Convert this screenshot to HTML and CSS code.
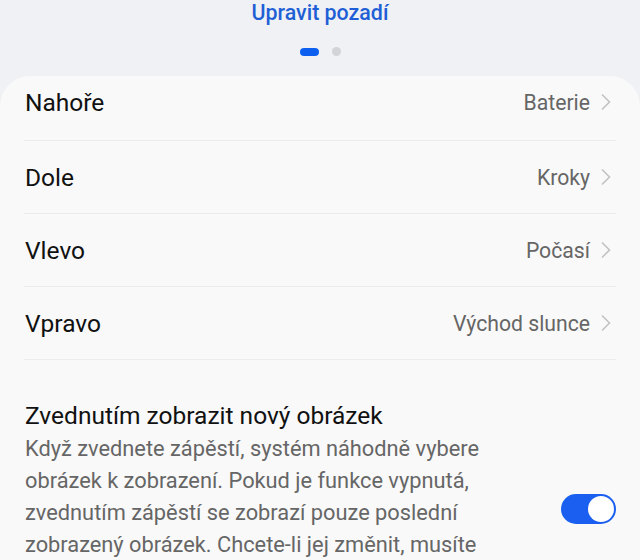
FILE: index.html
```html
<!DOCTYPE html>
<html lang="cs">
	<head>
		<meta charset="UTF-8" />
		<meta name="viewport" content="width=device-width, initial-scale=1.0" />
		<title>Upravit pozadí</title>

		<link rel="stylesheet" href="styles.css">
	</head>

	<body>
		<!-- Header with edit link and page dots -->
		<div class="header">
			<a class="editLink" href="#">Upravit pozadí</a>
			<div class="pageDots">
				<span class="dot dot-active"></span>
				<span class="dot"></span>
			</div>
		</div>

		<!-- Settings card -->
		<div class="card">
			<div class="row row-first">
				<span class="rowLabel">Nahoře</span>
				<span class="rowValue">Baterie</span>
				<svg class="chevron" viewBox="0 0 12 18" width="12" height="18">
					<path d="M2 1.5 L9.5 9 L2 16.5" />
				</svg>
			</div>
			<div class="row">
				<span class="rowLabel">Dole</span>
				<span class="rowValue">Kroky</span>
				<svg class="chevron" viewBox="0 0 12 18" width="12" height="18">
					<path d="M2 1.5 L9.5 9 L2 16.5" />
				</svg>
			</div>
			<div class="row">
				<span class="rowLabel">Vlevo</span>
				<span class="rowValue">Počasí</span>
				<svg class="chevron" viewBox="0 0 12 18" width="12" height="18">
					<path d="M2 1.5 L9.5 9 L2 16.5" />
				</svg>
			</div>
			<div class="row">
				<span class="rowLabel">Vpravo</span>
				<span class="rowValue">Východ slunce</span>
				<svg class="chevron" viewBox="0 0 12 18" width="12" height="18">
					<path d="M2 1.5 L9.5 9 L2 16.5" />
				</svg>
			</div>

			<div class="switchSection">
				<div class="switchText">
					<div class="switchTitle">Zvednutím zobrazit nový obrázek</div>
					<div class="switchDesc">
						Když zvednete zápěstí, systém náhodně vybere obrázek k zobrazení. Pokud je funkce vypnutá,
						zvednutím zápěstí se zobrazí pouze poslední zobrazený obrázek. Chcete-li jej změnit, musíte
						hodinky odemknout a klepnout na obrazovku nebo stisknout tlačítko.
					</div>
				</div>
				<div class="toggle toggle-on">
					<span class="knob"></span>
				</div>
			</div>
		</div>
	</body>
</html>
```

FILE: styles.css
```css
body {
	margin: 0;
	height: 560px;
	overflow: hidden;
	background-color: #f0f1f5;
	font-family: Roboto, "Noto Sans", sans-serif;
}

.header {
	display: flex;
	flex-direction: column;
	align-items: center;
	height: 76px;
}

.editLink {
	font-size: 21.4px;
	line-height: 26px;
	font-weight: 500;
	color: #1f5fd6;
	text-decoration: none;
}

.pageDots {
	display: flex;
	align-items: center;
	gap: 13px;
	margin-top: 21px;
}

.dot {
	width: 9px;
	height: 9px;
	border-radius: 50%;
	background-color: #d3d4d8;
}

.dot-active {
	width: 19px;
	height: 8px;
	border-radius: 4px;
	background-color: #0d5ff0;
}

.card {
	background-color: #f9f9f9;
	border-radius: 30px 30px 0 0;
	min-height: 500px;
}

.row {
	display: flex;
	align-items: center;
	height: 72px;
	margin: 0 24px;
	border-bottom: 1px solid #ececec;
}

.row-first {
	height: 52px;
	padding-bottom: 12px;
}

.rowLabel {
	flex: 1;
	margin-left: 1px;
	font-size: 24.5px;
	color: #111;
}

.rowValue {
	font-size: 21.2px;
	color: #666;
	margin-right: 10px;
}

.chevron {
	fill: none;
	stroke: #c2c2c2;
	stroke-width: 1.6;
	margin-right: 4px;
}

.switchSection {
	display: flex;
	align-items: center;
	padding: 39px 24px 0 25px;
}

.switchText {
	flex: 1;
}

.switchTitle {
	font-size: 24.5px;
	line-height: 34px;
	color: #111;
}

.switchDesc {
	max-width: 490px;
	font-size: 21.8px;
	line-height: 32px;
	color: #666;
}

.toggle {
	position: relative;
	width: 55px;
	height: 30px;
	margin-bottom: 6px;
	border-radius: 15px;
	background-color: #c8c8c8;
	flex-shrink: 0;
}

.toggle-on {
	background-color: #1a5ff0;
}

.knob {
	position: absolute;
	top: 2px;
	right: 2px;
	width: 26px;
	height: 26px;
	border-radius: 50%;
	background-color: #fff;
}
```
